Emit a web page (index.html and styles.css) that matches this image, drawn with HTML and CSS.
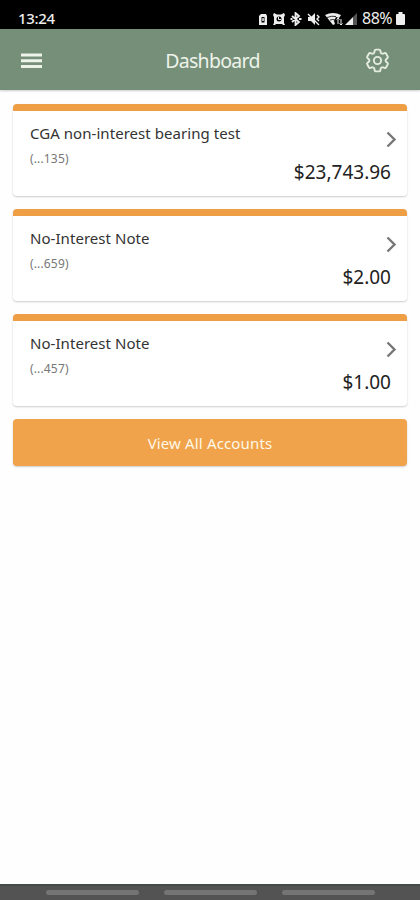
FILE: index.html
```
<!DOCTYPE html>
<html lang="en">
<head>
<meta charset="utf-8">
<title>Dashboard</title>
<link rel="stylesheet" href="styles.css">
</head>
<body>
<div class="status">
  <span class="clock">13:24</span>
  <svg class="status-icons" width="102" height="14" viewBox="0 0 102 14" fill="#eee">
    <path fill-rule="evenodd" d="M1 4l2-2h5l1 2v9H1zM3.500 5v5.500h3V5z"/><path d="M4.300 6h1.500v3H4.300z"/>
    <path fill-rule="evenodd" d="M16 1l3 1.500h4L26 1l1 2-1 2v6l1 2h-2l-1-1h-6l-1 1h-2l1-2V5l-1-2zM18.500 7a2.500 2.500 0 1 0 5 0a2.500 2.500 0 1 0-5 0z"/><path d="M20.500 5v2.500H23" fill="none" stroke="#eee"/>
    <path d="M34 4l7 6-3.500 3V1L41 4l-7 6M32.500 7h2M41 7h2.500" fill="none" stroke="#eee" stroke-width="1.800"/>
    <path d="M50 5h3l4-4v12l-4-4h-3z"/><path d="M50 2l11 11M59 3l2 2-2 2 2 2" fill="none" stroke="#eee" stroke-width="1.400"/>
    <path d="M67 3q8-4 16 0l-2 3-3-1-2 4 1 3-2 1z"/><path d="M69 5.500q5-2 9-1M72 8q3-1 5 0" fill="none" stroke="#000" stroke-width=".8"/><path d="M80 6v6M78.500 7.500L80 6l1.500 1.500M83 7v6M81.500 11.500L83 13l1.500-1.500" fill="none" stroke="#eee"/>
    <path d="M87 13l8-8v8z"/><path d="M95 5l4-4v12h-4z" fill="#555"/>
  </svg>
  <span class="percent">88%</span>
  <svg class="battery" width="9" height="13" viewBox="0 0 9 13" fill="#eee"><path d="M2.500 0h4v2H8q1 0 1 1v9q0 1-1 1H1q-1 0-1-1V3q0-1 1-1h1.500z"/></svg>
</div>
<header class="bar">
  <svg class="menu" width="21" height="16" viewBox="0 0 21 16" fill="#eef3ea"><path d="M0 .5h21v3H0zM0 6.300h21v3H0zM0 12.100h21v3H0z"/></svg>
  <h1>Dashboard</h1>
  <svg class="gear" width="29" height="29" viewBox="0 0 24 24" fill="none" stroke="#e4ecdf" stroke-width="1.600" stroke-linejoin="round"><path d="M9.594 3.940c.09-.542.56-.94 1.110-.94h2.593c.55 0 1.020.398 1.110.94l.213 1.281c.063.374.313.686.645.87.074.04.147.083.22.127.325.196.72.257 1.075.124l1.217-.456a1.125 1.125 0 0 1 1.370.49l1.296 2.247a1.125 1.125 0 0 1-.26 1.431l-1.003.827c-.293.241-.438.613-.43.992a7.723 7.723 0 0 1 0 .255c-.008.378.137.75.43.991l1.004.827c.424.35.534.955.26 1.430l-1.298 2.247a1.125 1.125 0 0 1-1.369.491l-1.217-.456c-.355-.133-.75-.072-1.076.124a6.470 6.470 0 0 1-.22.128c-.331.183-.581.495-.644.869l-.213 1.281c-.09.543-.56.94-1.110.94h-2.594c-.55 0-1.019-.398-1.110-.94l-.213-1.281c-.062-.374-.312-.686-.644-.87a6.520 6.520 0 0 1-.22-.127c-.325-.196-.72-.257-1.076-.124l-1.217.456a1.125 1.125 0 0 1-1.369-.49l-1.297-2.247a1.125 1.125 0 0 1 .26-1.431l1.004-.827c.292-.24.437-.613.43-.991a6.932 6.932 0 0 1 0-.255c.007-.38-.138-.751-.43-.992l-1.004-.827a1.125 1.125 0 0 1-.26-1.430l1.297-2.247a1.125 1.125 0 0 1 1.370-.491l1.216.456c.356.133.751.072 1.076-.124.072-.044.146-.086.22-.128.332-.183.582-.495.644-.869z"/><circle cx="12" cy="12" r="3"/></svg>
</header>
<main>
  <section class="card">
    <div class="info"><h2>CGA non-interest bearing test</h2><p>(...135)</p></div>
    <div class="side"><svg class="chev" width="11" height="17" viewBox="0 0 11 17"><path d="M1.500 1.500l7 7-7 7"/></svg><strong>$23,743.96</strong></div>
  </section>
  <section class="card">
    <div class="info"><h2>No-Interest Note</h2><p>(...659)</p></div>
    <div class="side"><svg class="chev" width="11" height="17" viewBox="0 0 11 17"><path d="M1.500 1.500l7 7-7 7"/></svg><strong>$2.00</strong></div>
  </section>
  <section class="card">
    <div class="info"><h2>No-Interest Note</h2><p>(...457)</p></div>
    <div class="side"><svg class="chev" width="11" height="17" viewBox="0 0 11 17"><path d="M1.500 1.500l7 7-7 7"/></svg><strong>$1.00</strong></div>
  </section>
  <button>View All Accounts</button>
</main>
<footer><i></i><i></i><i></i></footer>
</body>
</html>
```
FILE: styles.css
```
* { box-sizing: border-box; margin: 0; }
body { height: 900px; display: flex; flex-direction: column; overflow: hidden; background: #fefefe; font-family: "Noto Sans", sans-serif; }
.status { height: 29px; flex: none; background: #000; color: #eee; display: flex; align-items: flex-start; padding: 8px 15px 0 18px; }
.clock { font-size: 15px; line-height: 21px; font-weight: 500; letter-spacing: -.3px; }
.status-icons { margin: 4px 2px 0 auto; }
.percent { font-size: 16px; line-height: 21px; width: 34px; letter-spacing: -.5px; white-space: nowrap; }
.battery { margin-top: 4px; }
.bar { height: 61px; flex: none; background: #758f79; display: grid; grid-template-columns: 60px 1fr 60px; align-items: center; box-shadow: 0 1px 2px #0003; }
.menu { margin: 2px 0 0 21px; }
.bar h1 { font-size: 19.5px; font-weight: 400; line-height: 26px; letter-spacing: -.7px; color: #eef3ea; text-align: center; padding: 2px 0 0 5px; }
.gear { margin-left: 3px; margin-top: 2px; }
main { flex: 1; display: flex; flex-direction: column; gap: 13px; padding: 14px 13px; }
.card { height: 92px; border-top: 7px solid #ee9f45; border-radius: 4px; background: #fff; box-shadow: 0 1px 2px #0003; display: flex; justify-content: space-between; padding: 11px 16px 0 17px; }
.card h2 { font-size: 15px; font-weight: 400; line-height: 22px; letter-spacing: .05px; color: #333; }
.card p { font-size: 12px; line-height: 18px; margin-top: 6px; letter-spacing: .15px; color: #777; }
.side { display: flex; flex-direction: column; align-items: flex-end; }
.chev { margin: 9px -6px 0 0; fill: none; stroke: #777; stroke-width: 2.4; }
.side strong { font-size: 19px; font-weight: 400; line-height: 26px; margin-top: 11px; color: #222; }
button { height: 47px; border: 0; border-radius: 4px; background: #f0a34a; color: #fff8e8; font: 15px/22px "Noto Sans", sans-serif; letter-spacing: .15px; box-shadow: 0 1px 2px #0003; }
footer { height: 16px; flex: none; background: #535353; border-top: 2px solid #454b46; display: flex; gap: 25px; padding: 4px 0 0 46px; }
footer i { width: 93px; height: 5px; border-radius: 3px; background: #747474; }
```
